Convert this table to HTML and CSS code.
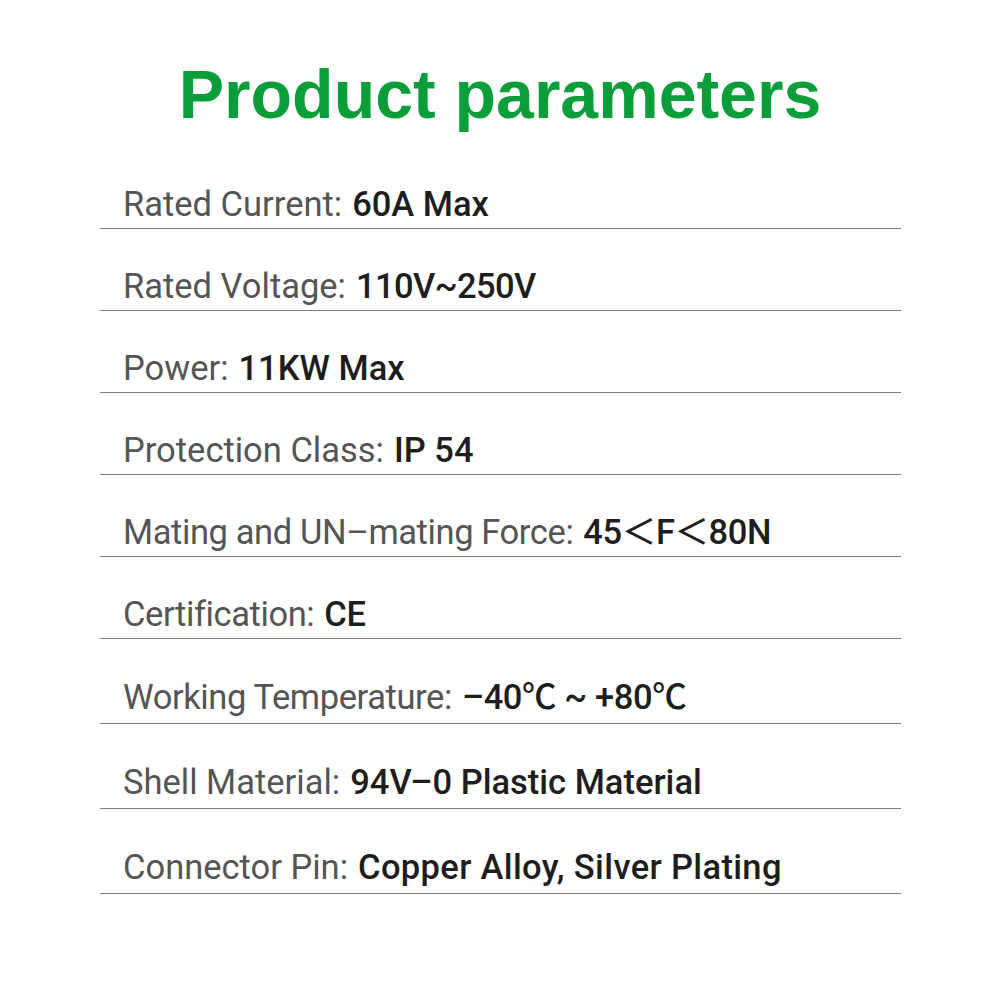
FILE: index.html
```html
<!DOCTYPE html>
<html>
<head>
<meta charset="utf-8">
<link rel="stylesheet" href="styles.css">
</head>
<body>
<div class="page">
  <header class="head">
    <h1 class="title">Product parameters</h1>
  </header>
  <div class="list">
    <div class="row"><span class="label">Rated Current:</span><span class="value">60A Max</span></div>
    <div class="row"><span class="label">Rated Voltage:</span><span class="value tight">110V~250V</span></div>
    <div class="row"><span class="label">Power:</span><span class="value">11KW Max</span></div>
    <div class="row"><span class="label">Protection Class:</span><span class="value">IP 54</span></div>
    <div class="row narrow"><span class="label">Mating and UN–mating Force:</span><span class="value">45＜F＜80N</span></div>
    <div class="row narrow"><span class="label">Certification:</span><span class="value">CE</span></div>
    <div class="row tall narrow"><span class="label">Working Temperature:</span><span class="value">–40℃ ~ +80℃</span></div>
    <div class="row tall"><span class="label">Shell Material:</span><span class="value">94V–0 Plastic Material</span></div>
    <div class="row tall"><span class="label">Connector Pin:</span><span class="value loose">Copper Alloy, Silver Plating</span></div>
  </div>
</div>
</body>
</html>
```

FILE: styles.css
```css
html, body {
  margin: 0;
  padding: 0;
  background: #ffffff;
}

.page {
  width: 1000px;
  height: 1000px;
  display: flex;
  flex-direction: column;
}

.head {
  height: 147px;
  box-sizing: border-box;
  padding-top: 60px;
  display: flex;
  justify-content: center;
}

.title {
  margin: 0;
  font-family: "Liberation Sans", Arial, sans-serif;
  font-weight: 700;
  font-size: 68px;
  line-height: 1;
  letter-spacing: 0;
  color: #0a9e3a;
}

.list {
  margin-left: 100px;
  width: 801px;
  display: flex;
  flex-direction: column;
}

.row {
  height: 82px;
  box-sizing: border-box;
  border-bottom: 1.5px solid #7c7c7c;
  display: flex;
  align-items: flex-end;
  gap: 10px;
  padding-left: 23px;
  padding-bottom: 7px;
  font-family: Roboto, "Noto Sans CJK SC", sans-serif;
  font-size: 34.5px;
  line-height: 1;
}

.row.tall {
  height: 85px;
  padding-bottom: 9px;
}

.label {
  color: #555555;
  font-weight: 400;
}

.value {
  color: #1e1e1e;
  font-weight: 500;
}

.narrow .label,
.narrow .value {
  letter-spacing: -0.4px;
}

.value.tight {
  letter-spacing: -0.6px;
}

.value.loose {
  letter-spacing: 0.35px;
}
```
